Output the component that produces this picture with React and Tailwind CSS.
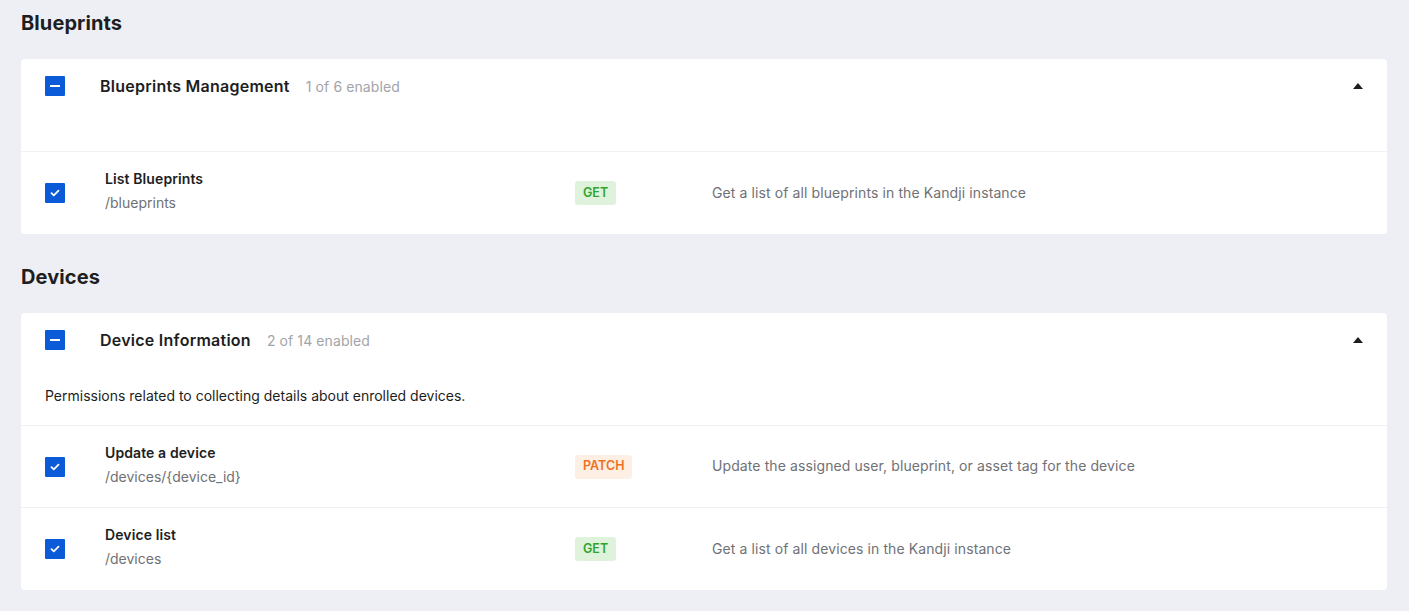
import React from 'react';

const font = { fontFamily: 'Inter, "Noto Sans", sans-serif' };

const sections = [
  {
    title: 'Blueprints',
    group: 'Blueprints Management',
    count: '1 of 6 enabled',
    description: '',
    rows: [
      { name: 'List Blueprints', path: '/blueprints', method: 'GET', text: 'Get a list of all blueprints in the Kandji instance' },
    ],
  },
  {
    title: 'Devices',
    group: 'Device Information',
    count: '2 of 14 enabled',
    description: 'Permissions related to collecting details about enrolled devices.',
    rows: [
      { name: 'Update a device', path: '/devices/{device_id}', method: 'PATCH', text: 'Update the assigned user, blueprint, or asset tag for the device' },
      { name: 'Device list', path: '/devices', method: 'GET', text: 'Get a list of all devices in the Kandji instance' },
    ],
  },
];

const methodTone = {
  GET: 'bg-[#dff3dc] text-[#2fa52f]',
  PATCH: 'bg-[#fdefe3] text-[#f2711f]',
};

function Box({ checked }) {
  return (
    <div className="w-5 h-5 bg-[#0b5bd9] rounded-[1px] flex items-center justify-center shrink-0">
      {checked ? (
        <svg width="10" height="8" viewBox="0 0 10 8" fill="none">
          <path d="M1.5 4.2 3.8 6.3 8.5 1.6" stroke="white" strokeWidth="1.8" strokeLinecap="round" strokeLinejoin="round" />
        </svg>
      ) : (
        <div className="w-[10px] h-[2px] bg-white" />
      )}
    </div>
  );
}

function Section({ s }) {
  return (
    <section>
      <h2 className="h-[44px] pt-[2px] flex items-center text-[20px] font-bold text-[#1d1e22] tracking-[0.1px]">{s.title}</h2>
      <div className="mt-[15px] bg-white rounded-[4px]">
        <div className="px-6 pt-[17px] pb-[19px] border-b border-[#f0f1f3]">
          <div className="flex items-center h-5">
            <Box />
            <span className="ml-[35px] text-[16px] font-semibold text-[#1d1e22] tracking-[0.25px]">{s.group}</span>
            <span className="ml-4 text-[14px] text-[#a3a4a8] tracking-[0.1px]">{s.count}</span>
            <svg className="ml-auto" width="10" height="6" viewBox="0 0 10 6">
              <path d="M5 0 10 6H0z" fill="#1d1e22" />
            </svg>
          </div>
          <p className={`mt-9 text-[14px] text-[#1d1e22] ${s.description ? 'h-5 leading-5' : 'h-0'}`}>{s.description}</p>
        </div>
        {s.rows.map((r, i) => (
          <div key={r.name} className={`h-[82px] px-6 flex items-center ${i < s.rows.length - 1 ? 'border-b border-[#f0f1f3]' : ''}`}>
            <Box checked />
            <div className="ml-10 w-[470px] mb-[4px]">
              <p className="text-[14px] font-semibold text-[#1d1e22] leading-6 tracking-[0.1px]">{r.name}</p>
              <p className="text-[14px] text-[#707176] leading-6">{r.path}</p>
            </div>
            <div className="w-[137px] mb-[2px]">
              <span className={`inline-flex items-center h-6 px-[8px] rounded-[3px] text-[12.5px] font-semibold ${methodTone[r.method]}`}>{r.method}</span>
            </div>
            <p className="text-[14px] text-[#707176] tracking-[0.1px] mb-[2px]">{r.text}</p>
          </div>
        ))}
      </div>
    </section>
  );
}

export default function App() {
  return (
    <div className="min-h-[611px] bg-[#eeeff4] pl-[21px] pr-[22px] pt-0 pb-6 flex flex-col gap-[20px]" style={font}>
      {sections.map(s => <Section key={s.title} s={s} />)}
    </div>
  );
}
